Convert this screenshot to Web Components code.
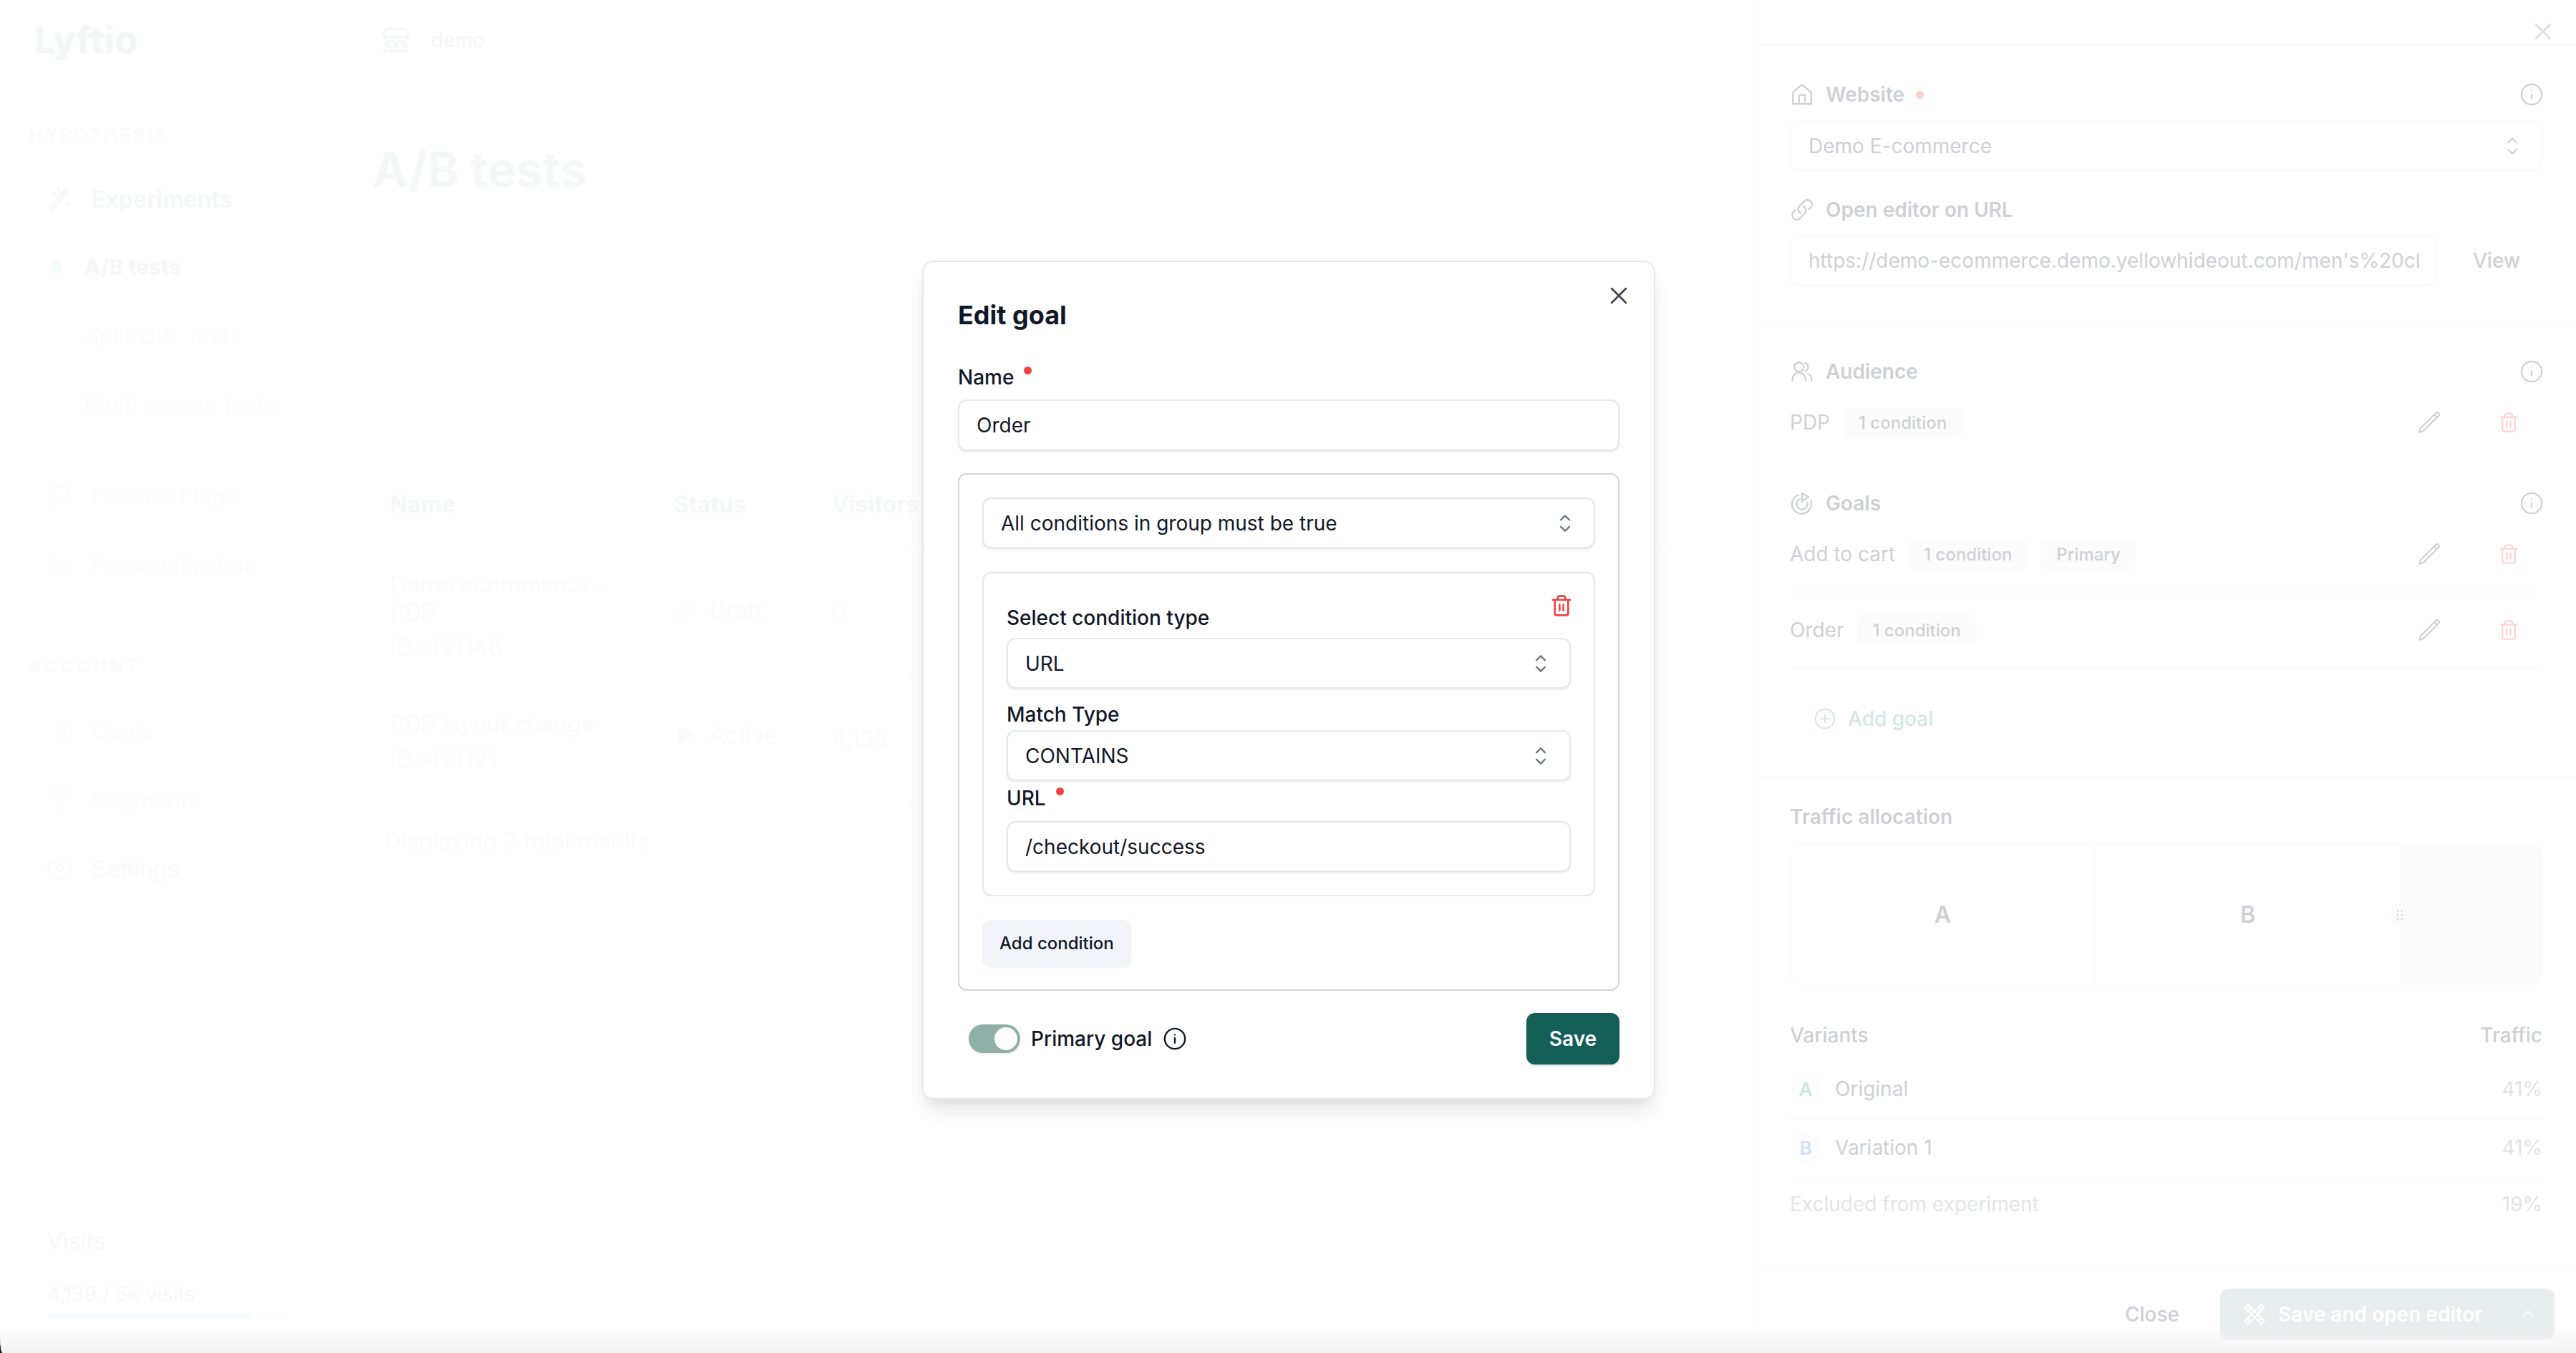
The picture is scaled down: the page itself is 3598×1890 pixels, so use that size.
<!DOCTYPE html>
<html lang="en">
<head>
<meta charset="utf-8">
<title>Lyftio - A/B tests</title>
<style>
    html, body { margin: 0; background: #1c1c1c; }
    body { font: 28px Inter, "Liberation Sans", sans-serif; }
</style>
</head>
<body>
<lyf-app>
    <lyf-sidebar slot="sidebar"></lyf-sidebar>
    <lyf-main slot="main"></lyf-main>
    <lyf-drawer slot="drawer"></lyf-drawer>
    <lyf-goal-modal slot="modal"></lyf-goal-modal>
</lyf-app>

<script>
// **************************************************************************** icon paths
const ICONS = {
    x: 'M6 18 18 6M6 6l12 12',
    updown: 'M8.25 15 12 18.75 15.75 15m-7.5-6L12 5.25 15.75 9',
    trash: 'M3 6h18M8 6V4a2 2 0 0 1 2-2h4a2 2 0 0 1 2 2v2M19 6v14a2 2 0 0 1-2 2H7a2 2 0 0 1-2-2V6M10 11v6M14 11v6',
    info: 'M12 22a10 10 0 1 0 0-20 10 10 0 0 0 0 20ZM12 16v-4.5M12 8h.01',
    pencil: 'm16.862 4.487 1.687-1.688a1.875 1.875 0 1 1 2.652 2.652L6.832 19.82a4.5 4.5 0 0 1-1.897 1.13l-2.685.8.8-2.685a4.5 4.5 0 0 1 1.13-1.897L16.863 4.487Zm0 0L19.5 7.125',
    home: 'M3 21V10.5a1.5 1.5 0 0 1 .55-1.15l7.5-6.2a1.5 1.5 0 0 1 1.9 0l7.5 6.2A1.5 1.5 0 0 1 21 10.5V21M3 21.2h18M9 21v-7.5a1 1 0 0 1 1-1h4a1 1 0 0 1 1 1V21',
    link: 'M13.19 8.688a4.5 4.5 0 0 1 1.242 7.244l-4.5 4.5a4.5 4.5 0 0 1-6.364-6.364l1.757-1.757m13.35-.622 1.757-1.757a4.5 4.5 0 0 0-6.364-6.364l-4.5 4.5a4.5 4.5 0 0 0 1.242 7.244',
    users: 'M2.5 21v-1.5a6.5 6.5 0 0 1 13 0V21M13.5 7.5a4.5 4.5 0 1 1-9 0 4.5 4.5 0 0 1 9 0ZM15 3.2a4.5 4.5 0 0 1 0 8.4M17.5 14a6.5 6.5 0 0 1 4 5.6V21',
    goal: 'M12 11V2l6.5 4-6.5 3.5M20.5 9.5a9.5 9.5 0 1 1-12-5.6M17 11a5.3 5.3 0 1 1-7-3.2',
    plus: 'M12 22a10 10 0 1 0 0-20 10 10 0 0 0 0 20ZM12 8v8M8 12h8',
    grip: 'M9 6h.01M15 6h.01M9 12h.01M15 12h.01M9 18h.01M15 18h.01',
    up: 'm5 15 7-7 7 7',
    tools: 'M5.5 2.5 21.5 18.5 18.5 21.5 2.5 5.5ZM18.5 2.5 21.5 5.5 5.5 21.5 2.5 18.5ZM8 5l-2 2M19 16l-2 2M16 5l2 2M5 16l2 2',
    wand: 'M17.2 3.2 3.4 20.4a1 1 0 0 0 .2 1.4l.6.5a1 1 0 0 0 1.4-.2L19.4 5a1 1 0 0 0-.2-1.4l-.6-.5a1 1 0 0 0-1.4.1ZM14.5 6.6l2.6 2.1M7 6v4M5 8h4M19 15v4M17 17h4M11 1.8 12 3l-1 1.2L10 3Z',
    store: 'M13.5 21v-7.5a.75.75 0 0 1 .75-.75h3a.75.75 0 0 1 .75.75V21m-4.5 0H2.36m11.14 0H18m0 0h3.64m-1.39 0V9.349M3.75 21V9.349m0 0a3.001 3.001 0 0 0 3.75-.615A2.993 2.993 0 0 0 9.75 9.75c.896 0 1.7-.393 2.25-1.016a2.993 2.993 0 0 0 2.25 1.016c.896 0 1.7-.393 2.25-1.016a3.001 3.001 0 0 0 3.75.614m-16.5 0a3.004 3.004 0 0 1-.621-4.72l1.189-1.19A1.5 1.5 0 0 1 5.378 3h13.243a1.5 1.5 0 0 1 1.06.44l1.19 1.189a3 3 0 0 1-.621 4.72M6.75 18h3.75a.75.75 0 0 0 .75-.75V13.5a.75.75 0 0 0-.75-.75H6.75a.75.75 0 0 0-.75.75v3.75c0 .414.336.75.75.75Z',
    flag: 'M4 22V3c5-3 9 3 16 0v12c-7 3-11-3-16 0',
    people: 'M8 7a3 3 0 1 1-.01 0ZM16 7a3 3 0 1 1-.01 0ZM3 21v-3a5 5 0 0 1 8 0v3M13 18a5 5 0 0 1 8 0v3',
    target: 'M12 22a10 10 0 1 0-4-19M12 17a5 5 0 1 0-2-9.6M12 12V2',
    funnel: 'M3 3h18l-7 9v7l-4 3V12Z',
    gear: 'M12 2l3 2.5 4-.5 1 4 3 3.5-3 3.5-1 4-4-.5L12 22l-3-2.5-4 .5-1-4-3-3.5 3-3.5 1-4 4 .5ZM12 15a3 3 0 1 0 0-6 3 3 0 0 0 0 6Z',
    play: 'M6 3v18l14-9Z'
};

// **************************************************************************** <lyf-icon>
// name="" size="" weight=""
customElements.define('lyf-icon', class extends HTMLElement {
    connectedCallback() {
        const size = this.getAttribute('size') || 24;
        const weight = this.getAttribute('weight') || 1.5;
        const fill = this.hasAttribute('filled') ? 'currentColor' : 'none';
        this.attachShadow({ mode: 'open' }).innerHTML =
            "<style>:host{display:inline-flex;flex:none}svg{display:block}</style>" +
            `<svg width="${size}" height="${size}" viewBox="0 0 24 24" fill="${fill}" stroke="currentColor"` +
            ` stroke-width="${weight}" stroke-linecap="round" stroke-linejoin="round">` +
            `<path d="${ICONS[this.getAttribute('name')]}"/></svg>`;
    }
}); // define

// **************************************************************************** <lyf-app>
// page frame, three columns and the modal layer
customElements.define('lyf-app', class extends HTMLElement {
    connectedCallback() {
        this.attachShadow({ mode: 'open' }).innerHTML =
            "<style>" +
            ":host{display:block;position:relative;width:3598px;height:1890px;overflow:hidden;background:#fff;border-bottom-left-radius:4px 22px}" +
            ".cols{display:grid;grid-template-columns:490px 1960px 1148px;height:100%}" +
            ".layer{position:absolute;inset:0;display:flex;justify-content:center;align-items:flex-start;padding:364px 0 0 2px;box-sizing:border-box}" +
            ".fade{position:absolute;left:0;right:0;bottom:0;height:40px;background:linear-gradient(rgba(240,240,240,0),#f3f3f3)}" +
            "</style>" +
            "<div class='cols'><slot name='sidebar'></slot><slot name='main'></slot><slot name='drawer'></slot></div>" +
            "<div class='fade'></div>" +
            "<div class='layer'><slot name='modal'></slot></div>";
    }
}); // define

// **************************************************************************** <lyf-nav-item>
customElements.define('lyf-nav-item', class extends HTMLElement {
    connectedCallback() {
        const icon = this.getAttribute('icon');
        this.attachShadow({ mode: 'open' }).innerHTML =
            "<style>" +
            ":host{display:flex;align-items:center;gap:26px;height:64px;color:#fcfcfc;font-size:32px;white-space:nowrap}" +
            ":host([strong]){color:#f6f7f7;font-weight:700}" +
            ":host([sub]){font-size:32px;padding-left:39px}" +
            ":host([sub][strong]){font-size:30px}" +
            "</style>" +
            (icon ? `<lyf-icon name="${icon}" size="38"></lyf-icon>` : "") +
            "<slot></slot>";
    }
}); // define

// **************************************************************************** <lyf-sidebar>
customElements.define('lyf-sidebar', class extends HTMLElement {
    connectedCallback() {
        this.attachShadow({ mode: 'open' }).innerHTML =
            "<style>" +
            ":host{display:flex;flex-direction:column;height:1890px;box-sizing:border-box;padding-bottom:47px}" +
            ".logo{height:114px;box-sizing:border-box;padding-left:48px;font-size:52px;font-weight:800;line-height:112px;color:#f5f7f7;border-bottom:2px solid #fefefe}" +
            ".head{height:40px;line-height:40px;margin-left:40px;font-size:26px;font-weight:600;letter-spacing:2.8px;color:#fbfbfb}" +
            ".nav{margin-left:64px;display:flex;flex-direction:column;gap:32px}" +
            ".subs{position:relative;margin:-1px 0 32px 15px;display:flex;flex-direction:column;gap:32px}" +
            ".subs::before{content:'';position:absolute;left:-1px;top:32px;width:2px;height:230px;background:#fcfdfd}" +
            ".dot{position:absolute;left:-9px;top:24px;width:17px;height:17px;border-radius:50%;background:#f6fcfb}" +
            ".foot{margin:auto 0 0 66px;color:#f8f8f8}" +
            ".visits{font-size:32px;line-height:40px}" +
            ".count{font-size:28px;line-height:40px;margin-top:34px}" +
            ".track{width:344px;height:9px;margin-top:6px;border-radius:5px;background:#fefefe}" +
            ".fill{width:287px;height:9px;border-radius:5px;background:#f8fcfc}" +
            "</style>" +
            "<div class='logo'>Lyftio</div>" +
            "<div class='head' style='margin-top:55px'>HYPOTHESIS</div>" +
            "<div class='nav' style='margin-top:37px'>" +
                "<lyf-nav-item icon='wand' strong>Experiments</lyf-nav-item>" +
                "<div class='subs'><span class='dot'></span>" +
                    "<lyf-nav-item sub strong>A/B tests</lyf-nav-item>" +
                    "<lyf-nav-item sub>Split URL tests</lyf-nav-item>" +
                    "<lyf-nav-item sub>Multi variate tests</lyf-nav-item>" +
                "</div>" +
                "<lyf-nav-item icon='flag'>Feature Flags</lyf-nav-item>" +
                "<lyf-nav-item icon='people'>Personalization</lyf-nav-item>" +
            "</div>" +
            "<div class='head' style='margin-top:90px;letter-spacing:3.6px'>ACCOUNT</div>" +
            "<div class='nav' style='margin-top:38px'>" +
                "<lyf-nav-item icon='target'>Goals</lyf-nav-item>" +
                "<lyf-nav-item icon='funnel'>Segments</lyf-nav-item>" +
                "<lyf-nav-item icon='gear' style='color:#fafafa'>Settings</lyf-nav-item>" +
            "</div>" +
            "<div class='foot'>" +
                "<div class='visits'>Visits</div>" +
                "<div class='count'>4,139 / 5K visits</div>" +
                "<div class='track'><div class='fill'></div></div>" +
            "</div>";
    }
}); // define

// **************************************************************************** <lyf-main>
// page title and the faded experiments table
customElements.define('lyf-main', class extends HTMLElement {
    connectedCallback() {
        const rows = [
            { name: "Demo ecommerce - PDP", id: "ID: 421146", icon: "pencil", status: "Draft", visitors: "0" },
            { name: "PDP layout change", id: "ID: 421121", icon: "play", status: "Active", visitors: "4,139" }
        ];
        const rowHTML = rows.map(row => `
            <div class="row">
                <div class="who"><div class="name">${row.name}</div><div class="id">${row.id}</div></div>
                <div class="status"><lyf-icon name="${row.icon}" size="32" ${row.icon === 'play' ? 'filled' : ''}></lyf-icon>${row.status}</div>
                <div class="num">${row.visitors}</div>
            </div>`).join('');
        this.attachShadow({ mode: 'open' }).innerHTML =
            "<style>" +
            ":host{display:block;height:1890px;color:#fbfbfb;font-size:32px}" +
            ".top{height:114px;box-sizing:border-box;padding-left:42px;display:flex;align-items:center;gap:28px;font-size:28px;color:#f5f6f6;border-bottom:2px solid #fefefe}" +
            "h1{margin:91px 0 0 30px;font-size:67px;line-height:64px;font-weight:700;color:#f6f8f8}" +
            ".table{margin:0 0 0 30px}" +
            ".row,.header{display:grid;grid-template-columns:396px 221px 1fr;padding-left:25px;align-items:center;border-bottom:2px solid #fefefe}" +
            ".header{margin-top:373px;height:125px;font-weight:700;color:#f6f7f7}" +
            ".row{height:176px}" +
            ".row:last-child{height:170px}" +
            ".who{padding-top:8px}" +
            ".name{width:330px;line-height:39px}" +
            ".id{margin-top:10px;line-height:40px}" +
            ".status{display:flex;align-items:center;gap:18px;margin-top:-10px}" +
            ".foot{margin:36px 0 0 47px;line-height:40px}" +
            "</style>" +
            "<div class='top'><lyf-icon name='store' size='42'></lyf-icon>demo</div>" +
            "<h1>A/B tests</h1>" +
            "<div class='table'><div class='header'><div>Name</div><div>Status</div><div>Visitors</div></div>" +
            rowHTML +
            "</div>" +
            "<div class='foot'>Displaying 2 total results</div>";
    }
}); // define

// **************************************************************************** <lyf-field>
// bordered box for inputs and selects, the select attribute adds the up/down chevron
customElements.define('lyf-field', class extends HTMLElement {
    connectedCallback() {
        this.attachShadow({ mode: 'open' }).innerHTML =
            "<style>" +
            ":host{display:flex;align-items:center;box-sizing:border-box;height:var(--field-height,71px);padding:0 21px 0 24px;" +
            "border:2px solid var(--field-line,#e5e7eb);border-radius:12px;background:#fff;box-shadow:var(--field-shadow,0 2px 3px rgba(15,23,42,.07));" +
            "color:var(--field-ink,#111827);font-size:28px;white-space:nowrap;overflow:hidden}" +
            ".text{flex:1;overflow:hidden;min-width:0}" +
            "lyf-icon{color:var(--field-icon,#6b7280)}" +
            "</style>" +
            "<div class='text'><slot></slot></div>" +
            (this.hasAttribute('select') ? "<lyf-icon name='updown' size='38'></lyf-icon>" : "");
    }
}); // define

// **************************************************************************** <lyf-label>
customElements.define('lyf-label', class extends HTMLElement {
    connectedCallback() {
        this.attachShadow({ mode: 'open' }).innerHTML =
            "<style>" +
            ":host{display:flex;align-items:flex-start;height:36px;line-height:36px;font-size:28px;font-weight:500;color:#111827}" +
            ".req{width:11px;height:11px;margin:3px 0 0 14px;border-radius:50%;background:#ef4444}" +
            "</style>" +
            "<slot></slot>" +
            (this.hasAttribute('required') ? "<span class='req'></span>" : "");
    }
}); // define

// **************************************************************************** <lyf-toggle>
customElements.define('lyf-toggle', class extends HTMLElement {
    connectedCallback() {
        this.attachShadow({ mode: 'open' }).innerHTML =
            "<style>" +
            ":host{display:flex;justify-content:flex-end;align-items:center;flex:none;width:72px;height:40px;box-sizing:border-box;padding:4px;" +
            "border-radius:20px;background:#8fafa9;box-shadow:0 2px 3px rgba(15,23,42,.08)}" +
            "i{display:block;width:32px;height:32px;border-radius:50%;background:#fff}" +
            "</style><i></i>";
    }
}); // define

// **************************************************************************** <lyf-goal-modal>
customElements.define('lyf-goal-modal', class extends HTMLElement {
    connectedCallback() {
        this.attachShadow({ mode: 'open' }).innerHTML =
            "<style>" +
            ":host{display:block;position:relative;box-sizing:border-box;width:1024px;height:1172px;padding:52px 48px 46px;background:#fff;" +
            "border:2px solid #e5e7eb;border-radius:16px;box-shadow:0 20px 30px -6px rgba(0,0,0,.1),0 8px 14px -6px rgba(0,0,0,.08);color:#111827}" +
            "h2{margin:0;font-size:36px;line-height:44px;font-weight:650}" +
            ".close{position:absolute;top:27px;right:29px;color:#374151}" +
            ".group{margin-top:31px;box-sizing:border-box;padding:32px 32px 32px;border:2px solid #d1d5db;border-radius:12px}" +
            ".card{position:relative;margin-top:33px;padding:44px 32px 32px;border:2px solid #e5e7eb;border-radius:12px}" +
            ".bin{position:absolute;top:29px;right:29px;color:#ef4444}" +
            ".add{display:inline-flex;align-items:center;height:65px;margin-top:33px;padding:0 24px;box-sizing:border-box;border-radius:12px;background:#f1f4f9;font-size:24px;font-weight:500;box-shadow:0 2px 3px rgba(15,23,42,.05);vertical-align:top}" +
            ".foot{display:flex;align-items:center;margin-top:31px;padding-left:15px}" +
            ".primary{margin-left:15px;font-weight:500}" +
            ".tip{margin-left:15px}" +
            ".save{display:flex;align-items:center;justify-content:center;margin-left:auto;width:130px;height:72px;border-radius:12px;background:#135e57;color:#fff;font-weight:600;box-shadow:0 2px 3px rgba(15,23,42,.15)}" +
            "</style>" +
            "<lyf-icon class='close' name='x' size='40' weight='1.5'></lyf-icon>" +
            "<h2>Edit goal</h2>" +
            "<lyf-label required style='margin-top:47px'>Name</lyf-label>" +
            "<lyf-field style='margin-top:13px;--field-height:72px'>Order</lyf-field>" +
            "<div class='group'>" +
                "<lyf-field select>All conditions in group must be true</lyf-field>" +
                "<div class='card'>" +
                    "<lyf-icon class='bin' name='trash' size='32' weight='2'></lyf-icon>" +
                    "<lyf-label>Select condition type</lyf-label>" +
                    "<lyf-field select style='margin-top:10px'>URL</lyf-field>" +
                    "<lyf-label style='margin-top:18px'>Match Type</lyf-label>" +
                    "<lyf-field select style='margin-top:4px'>CONTAINS</lyf-field>" +
                    "<lyf-label required style='margin-top:6px'>URL</lyf-label>" +
                    "<lyf-field style='margin-top:14px'>/checkout/success</lyf-field>" +
                "</div>" +
                "<div class='add'>Add condition</div>" +
            "</div>" +
            "<div class='foot'>" +
                "<lyf-toggle></lyf-toggle>" +
                "<span class='primary'>Primary goal</span>" +
                "<lyf-icon class='tip' name='info' size='34' weight='1.7'></lyf-icon>" +
                "<div class='save'>Save</div>" +
            "</div>";
    }
}); // define

// **************************************************************************** <lyf-drawer-head>
// icon, bold title and info mark of a drawer section
customElements.define('lyf-drawer-head', class extends HTMLElement {
    connectedCallback() {
        const icon = this.getAttribute('icon');
        this.attachShadow({ mode: 'open' }).innerHTML =
            "<style>" +
            ":host{display:flex;align-items:center;height:40px;gap:16px;font-weight:600;font-size:28px;color:#cfd0d4}" +
            ".req{width:11px;height:11px;border-radius:50%;background:#fdd0ce}" +
            ".info{margin-left:auto;margin-right:-2px}" +
            "</style>" +
            `<lyf-icon name="${icon}" size="34" weight="1.6"></lyf-icon><slot></slot>` +
            (this.hasAttribute('required') ? "<span class='req'></span>" : "") +
            (this.hasAttribute('info') ? "<lyf-icon class='info' name='info' size='34' weight='1.5'></lyf-icon>" : "");
    }
}); // define

// **************************************************************************** <lyf-rule-row>
// audience or goal row: name="", pills="a,b"
customElements.define('lyf-rule-row', class extends HTMLElement {
    connectedCallback() {
        const pills = this.getAttribute('pills').split(',').map(pill => `<span class="pill">${pill}</span>`).join('');
        this.attachShadow({ mode: 'open' }).innerHTML =
            "<style>" +
            ":host{display:flex;align-items:center;height:104px;gap:18px;color:#cfd0d4}" +
            ":host([line]){border-bottom:2px solid #fbfbfb}" +
            ".pill{display:flex;align-items:center;height:44px;padding:0 22px;border-radius:10px;background:#fcfcfd;font-size:24px;font-weight:500}" +
            ".edit{margin-left:auto}" +
            ".bin{margin:0 32px 0 61px;color:#fdd5d3}" +
            "</style>" +
            `<span>${this.getAttribute('name')}</span>${pills}` +
            "<lyf-icon class='edit' name='pencil' size='34' weight='1.5'></lyf-icon>" +
            "<lyf-icon class='bin' name='trash' size='30' weight='1.8'></lyf-icon>";
    }
}); // define

// **************************************************************************** <lyf-variant-row>
customElements.define('lyf-variant-row', class extends HTMLElement {
    connectedCallback() {
        const letter = this.getAttribute('letter');
        this.attachShadow({ mode: 'open' }).innerHTML =
            "<style>" +
            ":host{display:flex;align-items:center;box-sizing:border-box;height:82px;padding-bottom:2px;border-bottom:2px solid #fbfbfb;color:#cfd0d4}" +
            ".mark{display:flex;align-items:center;justify-content:center;width:44px;height:44px;margin-right:19px;border-radius:50%;font-size:26px;font-weight:600}" +
            ".A{color:#cfe8d5;background:#fbfefc}" +
            ".B{color:#cde2f5;background:#fbfdfe}" +
            ".pct{margin-left:auto;color:#e2e3e5}" +
            "</style>" +
            `<span class="mark ${letter}">${letter}</span><slot></slot><span class="pct">${this.getAttribute('traffic')}</span>`;
    }
}); // define

// **************************************************************************** <lyf-traffic-bar>
customElements.define('lyf-traffic-bar', class extends HTMLElement {
    connectedCallback() {
        this.attachShadow({ mode: 'open' }).innerHTML =
            "<style>" +
            ":host{display:flex;position:relative;box-sizing:border-box;height:198px;border:2px solid #fbfbfb;border-radius:16px;font-weight:600;font-size:32px;color:#cfd0d4}" +
            ".part{display:flex;align-items:center;justify-content:center;width:423px;border-right:2px solid #fcfcfc}" +
            ".part + .part{width:425px}" +
            ".rest{flex:1;background:#fcfcfc;border-radius:0 14px 14px 0}" +
            ".grip{position:absolute;left:838px;top:82px;display:flex;align-items:center;justify-content:center;width:24px;height:32px;border-radius:8px;background:#fafbfc}" +
            "</style>" +
            "<div class='part'>A</div><div class='part'>B</div><div class='rest'></div>" +
            "<div class='grip'><lyf-icon name='grip' size='22' weight='2.6'></lyf-icon></div>";
    }
}); // define

// **************************************************************************** <lyf-drawer>
customElements.define('lyf-drawer', class extends HTMLElement {
    connectedCallback() {
        this.attachShadow({ mode: 'open' }).innerHTML =
            "<style>" +
            ":host{display:flex;flex-direction:column;height:1890px;box-sizing:border-box;border-left:2px solid #fbfbfb;background:#fff;color:#cfd0d4;" +
            "--field-line:#fafafa;--field-ink:#cfd0d4;--field-icon:#d2d3d7;--field-shadow:0 2px 3px rgba(15,23,42,.01);--field-height:70px}" +
            ".top{display:flex;justify-content:flex-end;align-items:flex-start;height:38px;padding:24px 26px 0 0;border-bottom:2px solid #fbfbfb;box-sizing:content-box;color:#dcdde0}" +
            ".section{padding:0 47px 0 48px}" +
            ".line{border-bottom:2px solid #fbfbfb}" +
            ".url{display:flex;align-items:center;margin-top:16px;gap:50px}" +
            ".url lyf-field{width:904px;flex:none}" +
            ".add{display:flex;align-items:center;height:40px;margin-top:50px;padding-left:33px;gap:16px;color:#d2e7e2}" +
            ".title{height:40px;line-height:40px;font-weight:600}" +
            ".between{display:flex;justify-content:space-between;height:40px;line-height:40px;font-weight:500}" +
            ".excluded{display:flex;justify-content:space-between;align-items:center;height:72px;color:#e4e5e7}" +
            ".foot{display:flex;justify-content:flex-end;align-items:flex-start;gap:57px;margin-top:auto;box-sizing:border-box;height:125px;padding:33px 30px 0 0;border-top:2px solid #fbfbfb}" +
            ".close{line-height:72px;font-weight:500}" +
            ".go{display:flex;align-items:center;box-sizing:border-box;width:467px;height:72px;padding:0 24px 0 31px;border-radius:12px;background:#e7eeed;color:#fff;font-weight:600}" +
            ".go span{margin-left:16px}" +
            ".go .up{margin-left:auto}" +
            "</style>" +
            "<div class='top'><lyf-icon name='x' size='40'></lyf-icon></div>" +
            "<div class='section line' style='padding-bottom:50px'>" +
                "<lyf-drawer-head icon='home' required info style='margin-top:48px'>Website</lyf-drawer-head>" +
                "<lyf-field select style='margin-top:17px'>Demo E-commerce</lyf-field>" +
                "<lyf-drawer-head icon='link' style='margin-top:34px'>Open editor on URL</lyf-drawer-head>" +
                "<div class='url'><lyf-field>https://demo-ecommerce.demo.yellowhideout.com/men's%20cl</lyf-field><span style='font-weight:500'>View</span></div>" +
            "</div>" +
            "<div class='section line' style='padding-bottom:61px'>" +
                "<lyf-drawer-head icon='users' info style='margin-top:48px'>Audience</lyf-drawer-head>" +
                "<lyf-rule-row name='PDP' pills='1 condition' style='margin-top:-1px'></lyf-rule-row>" +
                "<lyf-drawer-head icon='goal' info style='margin-top:41px'>Goals</lyf-drawer-head>" +
                "<lyf-rule-row line name='Add to cart' pills='1 condition,Primary' style='margin-top:-1px'></lyf-rule-row>" +
                "<lyf-rule-row line name='Order' pills='1 condition'></lyf-rule-row>" +
                "<div class='add'><lyf-icon name='plus' size='32' weight='1.5'></lyf-icon><span style='font-weight:500'>Add goal</span></div>" +
            "</div>" +
            "<div class='section'>" +
                "<div class='title' style='margin-top:34px'>Traffic allocation</div>" +
                "<lyf-traffic-bar style='margin-top:17px'></lyf-traffic-bar>" +
                "<div class='between' style='margin-top:50px'><span>Variants</span><span>Traffic</span></div>" +
                "<lyf-variant-row letter='A' traffic='41%' style='margin-top:16px'>Original</lyf-variant-row>" +
                "<lyf-variant-row letter='B' traffic='41%'>Variation 1</lyf-variant-row>" +
                "<div class='excluded'><span>Excluded from experiment</span><span style='color:#e2e3e5'>19%</span></div>" +
            "</div>" +
            "<div class='foot'>" +
                "<span class='close'>Close</span>" +
                "<div class='go'><lyf-icon name='tools' size='34' weight='1.5'></lyf-icon><span>Save and open editor</span><lyf-icon class='up' name='up' size='26' weight='1.8'></lyf-icon></div>" +
            "</div>";
    }
}); // define
</script>
</body>
</html>
